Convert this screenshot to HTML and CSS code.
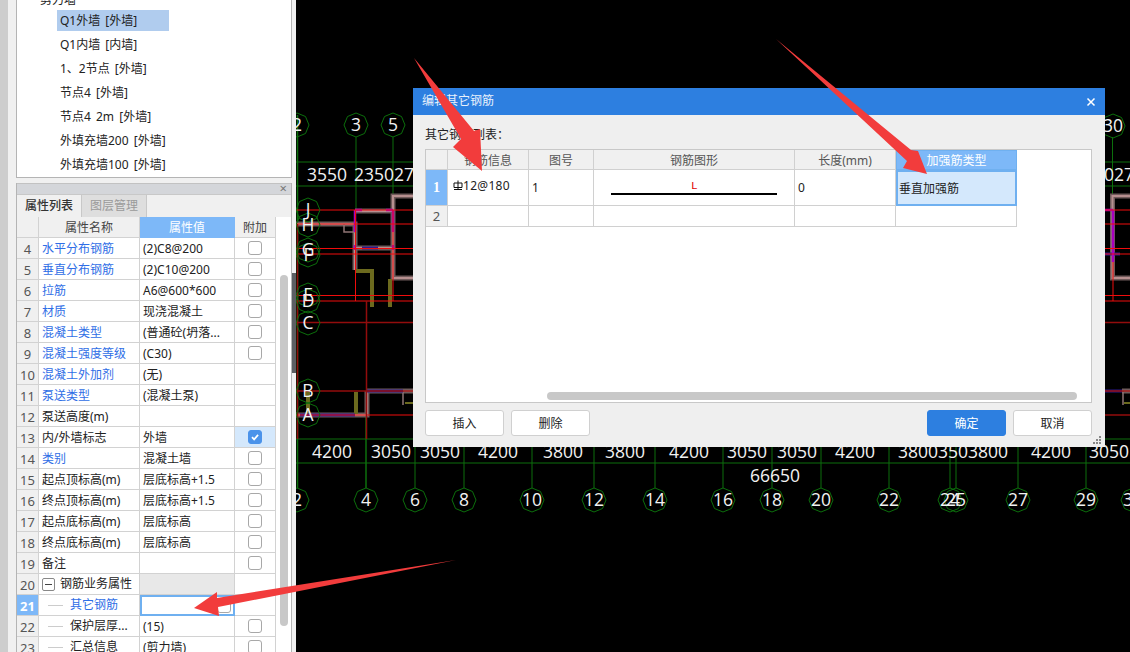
FILE: index.html
```html
<!DOCTYPE html>
<html lang="zh">
<head>
<meta charset="utf-8">
<title>编辑其它钢筋</title>
<link rel="stylesheet" href="styles.css">
</head>
<body>
<div class="app">
  <aside class="sidebar">
    <div class="strip"></div>
    <div class="panels">
      <ul class="tree">
        <li class="tree-root">剪力墙</li>
        <li class="tree-item selected">Q1外墙 [外墙]</li>
        <li class="tree-item">Q1内墙 [内墙]</li>
        <li class="tree-item">1、2节点 [外墙]</li>
        <li class="tree-item">节点4 [外墙]</li>
        <li class="tree-item">节点4 2m [外墙]</li>
        <li class="tree-item">外填充墙200 [外墙]</li>
        <li class="tree-item">外填充墙100 [外墙]</li>
      </ul>
      <section class="props">
        <div class="props-title"><span class="props-close">×</span></div>
        <div class="tabs"><span class="tab active">属性列表</span><span class="tab">图层管理</span></div>
        <div class="props-body">
          <div class="grid">
            <div class="hd"></div><div class="hd">属性名称</div><div class="hd hd-on">属性值</div><div class="hd">附加</div>

            <div class="n">4</div><div class="k link">水平分布钢筋</div><div class="v">(2)C8@200</div><div class="a"><i class="cb"></i></div>
            <div class="n">5</div><div class="k link">垂直分布钢筋</div><div class="v">(2)C10@200</div><div class="a"><i class="cb"></i></div>
            <div class="n">6</div><div class="k link">拉筋</div><div class="v">A6@600*600</div><div class="a"><i class="cb"></i></div>
            <div class="n">7</div><div class="k link">材质</div><div class="v">现浇混凝土</div><div class="a"><i class="cb"></i></div>
            <div class="n">8</div><div class="k link">混凝土类型</div><div class="v">(普通砼(坍落...</div><div class="a"><i class="cb"></i></div>
            <div class="n">9</div><div class="k link">混凝土强度等级</div><div class="v">(C30)</div><div class="a"><i class="cb"></i></div>
            <div class="n">10</div><div class="k link">混凝土外加剂</div><div class="v">(无)</div><div class="a"></div>
            <div class="n">11</div><div class="k link">泵送类型</div><div class="v">(混凝土泵)</div><div class="a"></div>
            <div class="n">12</div><div class="k">泵送高度(m)</div><div class="v"></div><div class="a"></div>
            <div class="n">13</div><div class="k">内/外墙标志</div><div class="v">外墙</div><div class="a a-on"><i class="cb cb-on"><svg class="tick" viewBox="0 0 14 14"><path d="M3.5 7.2 6 9.8 10.6 4.6"/></svg></i></div>
            <div class="n">14</div><div class="k link">类别</div><div class="v">混凝土墙</div><div class="a"><i class="cb"></i></div>
            <div class="n">15</div><div class="k">起点顶标高(m)</div><div class="v">层底标高+1.5</div><div class="a"><i class="cb"></i></div>
            <div class="n">16</div><div class="k">终点顶标高(m)</div><div class="v">层底标高+1.5</div><div class="a"><i class="cb"></i></div>
            <div class="n">17</div><div class="k">起点底标高(m)</div><div class="v">层底标高</div><div class="a"><i class="cb"></i></div>
            <div class="n">18</div><div class="k">终点底标高(m)</div><div class="v">层底标高</div><div class="a"><i class="cb"></i></div>
            <div class="n">19</div><div class="k">备注</div><div class="v"></div><div class="a"><i class="cb"></i></div>
            <div class="n">20</div><div class="k group"><i class="minus"></i>钢筋业务属性</div><div class="v v-gray"></div><div class="a"></div>
            <div class="n n-on">21</div><div class="k child link"><i class="dash"></i>其它钢筋</div><div class="v v-edit"><i class="mini"></i></div><div class="a-hidden"></div>
            <div class="n">22</div><div class="k child"><i class="dash"></i>保护层厚...</div><div class="v">(15)</div><div class="a"><i class="cb"></i></div>
            <div class="n">23</div><div class="k child"><i class="dash"></i>汇总信息</div><div class="v">(剪力墙)</div><div class="a"><i class="cb"></i></div>
          </div>
          <div class="rail"><div class="thumb"></div></div>
        </div>
      </section>
    </div>
    <div class="splitter"><div class="split-grip"></div></div>
  </aside>

  <main class="canvas">
    <svg class="cad" viewBox="296 0 834 652" xmlns="http://www.w3.org/2000/svg">
      <defs>
        <polygon id="oct" points="0,-12 8.5,-8.5 12,0 8.5,8.5 0,12 -8.5,8.5 -12,0 -8.5,-8.5"/>
        <path id="walls" d="M296 224H355V270M355 211H393V278H413M393 211V196H413M355 248H393M367 391V415H296M367 391H413M1130 196H1112.500V278H1130M1122 391H1130"/>
      </defs>
      <g class="g1">
        <path d="M296 162H413M296 186H413M296 439H413M1105 162H1130M1105 186H1130M1105 439H1130M296 463H1130"/>
        <path d="M356 137V210M393 137V210M1112.500 137V196"/>
        <path d="M415 439V488M464 439V488M532 439V488M594 439V488M655 439V488M723 439V488M772 439V488M821 439V488M889 439V488M950 439V488M956 439V488M1018 439V488M1086 439V488"/>
      </g>
      <path class="g2" d="M297.500 115V488M366 415V488"/>
      <use href="#walls" class="wall-out"/>
      <use href="#walls" class="wall-in"/>
      <path class="thin" d="M344 224V232H355M403 391V405M1123 391V405"/>
      <path class="olive" d="M355 271H372V307M390 279V307M356 392V414M308 391V415"/>
      <path class="olive-s" d="M405 403H413M1124 403H1130"/>
      <path class="navy" d="M300 415H355M367 391H403M362 248H378M1105 254H1120M1105 391H1122"/>
      <path class="mag" d="M355 210V232M393 210V232M355 245V250M393 245V250M355 210H362M393 210H386M1113 210V262M1105 210H1113"/>
      <path class="red" d="M296 210H413M296 224H413M296 248.500H413M296 254H413M296 295.500H413M296 301H413M296 415H413M355.500 210V301M393 210V301M1105 210H1130M1105 224H1130M1105 248.500H1130M1105 254H1130M1105 295.500H1130M1105 301H1130M1113 262V301"/>
      <path class="dred" d="M296 322.500H413M296 391H413M366.500 301V439M297.500 224V439M1105 322.500H1130M1105 391H1130M1105 415H1130"/>
      <g class="ring">
        <use href="#oct" x="297" y="125"/><use href="#oct" x="356" y="125"/><use href="#oct" x="393" y="125"/><use href="#oct" x="1113" y="126"/>
        <use href="#oct" x="308" y="210"/><use href="#oct" x="308" y="225"/><use href="#oct" x="308" y="250"/><use href="#oct" x="308" y="255"/><use href="#oct" x="308" y="295"/><use href="#oct" x="308" y="301"/><use href="#oct" x="308" y="323"/><use href="#oct" x="308" y="391"/><use href="#oct" x="308" y="415"/>
        <use href="#oct" x="297" y="500"/><use href="#oct" x="366" y="500"/><use href="#oct" x="415" y="500"/><use href="#oct" x="464" y="500"/><use href="#oct" x="532" y="500"/><use href="#oct" x="594" y="500"/><use href="#oct" x="655" y="500"/><use href="#oct" x="723" y="500"/><use href="#oct" x="772" y="500"/><use href="#oct" x="821" y="500"/><use href="#oct" x="889" y="500"/><use href="#oct" x="950" y="500"/><use href="#oct" x="956" y="500"/><use href="#oct" x="1018" y="500"/><use href="#oct" x="1086" y="500"/><use href="#oct" x="1133" y="500"/>
      </g>
      <g class="label">
        <text x="297" y="131">2</text><text x="356" y="131">3</text><text x="393" y="131">5</text><text x="1113" y="132">30</text>
        <text x="308" y="216">J</text><text x="308" y="231">H</text><text x="308" y="256">G</text><text x="308" y="261">F</text><text x="308" y="301">E</text><text x="308" y="307">D</text><text x="308" y="329">C</text><text x="308" y="397">B</text><text x="308" y="421">A</text>
        <text x="327" y="181">3550</text><text x="384" y="181">235027</text><text x="1119" y="181">027</text>
        <text x="332" y="458">4200</text><text x="391" y="458">3050</text><text x="440" y="458">3050</text><text x="498" y="458">4200</text><text x="563" y="458">3800</text><text x="625" y="458">3800</text><text x="689" y="458">4200</text><text x="747" y="458">3050</text><text x="797" y="458">3050</text><text x="855" y="458">4200</text><text x="953" y="458">38003503800</text><text x="1051" y="458">4200</text><text x="1109" y="458">3050</text>
        <text x="775" y="482">66650</text>
        <text x="297" y="506">2</text><text x="366" y="506">4</text><text x="415" y="506">6</text><text x="464" y="506">8</text><text x="532" y="506">10</text><text x="594" y="506">12</text><text x="655" y="506">14</text><text x="723" y="506">16</text><text x="772" y="506">18</text><text x="821" y="506">20</text><text x="889" y="506">22</text><text x="950" y="506">24</text><text x="956" y="506">25</text><text x="1018" y="506">27</text><text x="1086" y="506">29</text><text x="1133" y="506">30</text>
      </g>
    </svg>
  </main>
</div>

<div class="dialog">
  <header class="dlg-title"><span>编辑其它钢筋</span><svg class="dlg-x" viewBox="0 0 10 10"><path d="M1.500 1.500 8.500 8.500M8.500 1.500 1.500 8.500"/></svg></header>
  <div class="dlg-body">
    <div class="dlg-label">其它钢筋列表：</div>
    <div class="dlg-table">
      <div class="rebar">
        <div class="rh"></div><div class="rh">钢筋信息</div><div class="rh">图号</div><div class="rh">钢筋图形</div><div class="rh">长度(mm)</div><div class="rh rh-on">加强筋类型</div>
        <div class="rn rn-on">1</div>
        <div class="rc rc-info"><svg class="grade" viewBox="0 0 10 11"><path d="M1 7.500V3H9V7.500H1M5 .5V9.500M1 9.500H9"/></svg><span class="rc-val">12@180</span></div>
        <div class="rc rc-1">1</div>
        <div class="rc shape"><span class="shape-l">L</span><span class="shape-bar"></span></div>
        <div class="rc rc-1">0</div>
        <div class="rc rc-on">垂直加强筋</div>
        <div class="rn">2</div><div class="rc"></div><div class="rc"></div><div class="rc"></div><div class="rc"></div><div class="rc"></div>
      </div>
      <div class="hbar"><div class="hthumb"></div></div>
    </div>
    <div class="dlg-actions">
      <button class="btn">插入</button><button class="btn">删除</button>
      <span class="spacer"></span>
      <button class="btn primary">确定</button><button class="btn">取消</button>
    </div>
  </div>
  <svg class="grip" viewBox="0 0 9 9"><path d="M6 0h2v2H6zM3 3h2v2H3zM6 3h2v2H6zM0 6h2v2H0zM3 6h2v2H3zM6 6h2v2H6z"/></svg>
</div>

<svg class="arrows" viewBox="0 0 1130 652" xmlns="http://www.w3.org/2000/svg">
  <polygon points="414,58 474,131 480,129 482,171 453,147 461,139"/>
  <polygon points="776,39 911,150 918,151 927,174 903,168 907,161"/>
  <polygon points="456,560 217,598 217,592 194,608 219,616 218,607"/>
</svg>
</body>
</html>
```
FILE: styles.css
```css
* { box-sizing: border-box; }
html, body { margin: 0; padding: 0; width: 1130px; height: 652px; overflow: hidden; background: #000; }
body { position: relative; font: 12px/1.2 "Noto Sans", "Noto Sans CJK SC", sans-serif; color: #222; }
.app { display: flex; width: 1130px; height: 652px; }

/* sidebar */
.sidebar { display: flex; width: 296px; height: 652px; flex: none; background: #f0f0f0; }
.strip { width: 8px; background: #cdcdcd; flex: none; }
.panels { width: 276px; margin-left: 8px; flex: none; display: flex; flex-direction: column; }
.splitter { width: 4px; margin-left: 0; flex: none; padding-top: 273px; }
.split-grip { height: 100px; background: #5c5f63; }

.tree { list-style: none; margin: 0; padding: 0; height: 178px; flex: none; background: #fff; border: 1px solid #b4b4b4; border-top: 0; overflow: hidden; }
.tree-root { height: 10px; padding-left: 23px; line-height: 0; }
.tree-item { height: 21px; margin: 0 0 3px 40px; padding-left: 3px; line-height: 22px; width: 112px; color: #222; white-space: nowrap; word-spacing: 2px; }
.tree-item.selected { background: #b0ccee; }

.props { margin-top: 5px; flex: 1; min-height: 0; overflow: hidden; border-left: 1px solid #b4b4b4; border-right: 1px solid #b4b4b4; background: #fff; }
.props-title { height: 11px; background: #d4d6da; border-top: 1px solid #c2c2c2; display: flex; justify-content: flex-end; padding-right: 4px; }
.props-close { font-size: 13px; line-height: 9px; color: #777; }
.tabs { display: flex; height: 23px; background: #f0f0f0; border-top: 1px solid #c8c8c8; }
.tab { width: 65px; line-height: 21px; text-align: center; font-size: 12px; color: #9a9a9a; background: #dedede; border-right: 1px solid #c8c8c8; }
.tab.active { color: #333; background: #f0f0f0; font-weight: 500; }

.props-body { display: flex; }
.grid { display: grid; grid-template-columns: 22px 101px 95px 41px; grid-auto-rows: 21px; width: 259px; flex: none; border-right: 1px solid #fff; }
.grid > div { border-right: 1px solid #d2d2d2; border-bottom: 1px solid #d2d2d2; white-space: nowrap; overflow: hidden; line-height: 22px; }
.grid > .hd { background: #f0f0f0; text-align: center; color: #444; font-size: 12px; line-height: 21px; }
.grid > .hd-on { background: #7db8f8; color: #fff; border-color: #7db8f8; }
.n { background: #f0f0f0; text-align: center; color: #555; font-size: 13px; }
.n-on { background: #7db8f8; color: #fff; font-weight: 700; }
.k { padding-left: 3px; color: #222; }
.link { color: #2f6ee6; }
.v { padding-left: 3px; color: #222; }
.v-gray { background: #e8e8e8; }
.grid > .v-edit { border: 2px solid #6fb0f0; position: relative; }
.a { display: flex; align-items: center; justify-content: center; }
.a-on { background: #d4e8fc; }
.cb { display: block; width: 14px; height: 14px; border: 1px solid #a8a8a8; border-radius: 3px; background: #fff; }
.cb-on { background: #4b93ea; border-color: #4b93ea; }
.tick { display: block; width: 12px; height: 12px; fill: none; stroke: #fff; stroke-width: 2; }
.group { padding-left: 3px; display: flex; align-items: center; }
.minus { width: 13px; height: 13px; border: 1px solid #888; border-radius: 2px; margin-right: 5px; flex: none; position: relative; }
.minus::after { content: ""; position: absolute; left: 2px; right: 2px; top: 5px; height: 1px; background: #444; }
.child { display: flex; align-items: center; padding-left: 9px; }
.dash { width: 15px; height: 1px; background: #ccc; margin-right: 7px; flex: none; }
.mini { position: absolute; right: 2px; top: 1px; width: 14px; height: 15px; border: 1px solid #a8a8a8; border-radius: 3px; }
.rail { width: 16px; flex: none; padding: 58px 0 0 4px; }
.thumb { width: 8px; height: 351px; background: #c8c8c8; border-radius: 4px; }

/* canvas */
.canvas { flex: 1; min-width: 0; }
.cad { display: block; width: 834px; height: 652px; background: #000; }
.g1 path, .g1 { fill: none; stroke: #0c6f0c; stroke-width: 1; }
.g2 { fill: none; stroke: #0c6f0c; stroke-width: 1.500; }
.ring { fill: none; stroke: #0c6f0c; stroke-width: 1; }
.wall-out { fill: none; stroke: #6f5a5a; stroke-width: 5; }
.wall-in { fill: none; stroke: #b68f8f; stroke-width: 2; }
.thin { fill: none; stroke: #8f7474; stroke-width: 1.500; }
.olive { fill: none; stroke: #6c6a1e; stroke-width: 4; }
.olive-s { fill: none; stroke: #6c6a1e; stroke-width: 2; }
.navy { fill: none; stroke: #2c1a8c; stroke-width: 3; }
.mag { fill: none; stroke: #a800c0; stroke-width: 2.500; }
.red { fill: none; stroke: #f00c0c; stroke-width: 1; }
.dred { fill: none; stroke: #920c0c; stroke-width: 1.500; }
.label text { font: 17.500px "Open Sans", "DejaVu Sans", sans-serif; fill: #f2f2f2; text-anchor: middle; }

/* dialog */
.dialog { position: absolute; left: 413px; top: 88px; width: 692px; height: 359px; background: #efefef; }
.dlg-title { height: 27px; background: #2d7fe0; color: #e8f1fc; display: flex; align-items: center; justify-content: space-between; padding: 0 9px; }
.dlg-x { width: 10px; height: 10px; fill: none; stroke: #fff; stroke-width: 1.500; }
.dlg-body { padding: 12px 13px 0 12px; }
.dlg-label { height: 22px; line-height: 16px; color: #222; }
.dlg-table { height: 254px; background: #fff; border: 1px solid #c8c8c8; position: relative; }
.rebar { display: grid; grid-template-columns: 22px 81px 65px 201px 101px 121px; grid-template-rows: 20px 36px 21px; width: 591px; }
.rebar > div { border-right: 1px solid #d0d0d0; border-bottom: 1px solid #d0d0d0; white-space: nowrap; }
.rh { background: #f0f0f0; text-align: center; line-height: 21px; color: #555; }
.rebar > .rh-on { background: #7db8f8; color: #fff; border: 1px solid #6fb0f0; line-height: 19px; }
.rn { background: #f0f0f0; text-align: center; color: #555; line-height: 21px; font-size: 13px; }
.rn-on { background: #7db8f8; color: #fff; font-weight: 700; line-height: 35px; font-size: 14px; font-family: "Liberation Serif", serif; }
.rc { padding: 0 0 0 5px; color: #222; display: flex; align-items: flex-start; }
.rc-info { padding: 9px 0 0 5px; }
.rc-val { letter-spacing: .3px; margin-left: 0; }
.rc-1 { padding: 11px 0 0 3px; }
.grade { width: 10px; height: 11px; margin-top: 1px; fill: none; stroke: #111; stroke-width: 1; }
.rebar > .rc-on { background: #d4e8fc; border: 2px solid #6fb0f0; padding: 10px 0 0 1px; }
.shape { position: relative; padding: 0; display: block; }
.shape-l { position: absolute; left: 97px; top: 10px; font: 11px "Liberation Mono", monospace; color: #e00000; }
.shape-bar { position: absolute; left: 17px; width: 166px; top: 23px; height: 2px; background: #000; }
.hbar { position: absolute; left: 121px; right: 14px; top: 242px; }
.hthumb { height: 8px; background: #c8c8c8; border-radius: 4px; }
.dlg-actions { display: flex; gap: 7px; margin-top: 7px; }
.spacer { flex: 1; }
.btn { width: 79px; height: 26px; padding: 2px 0 0; background: #fff; border: 1px solid #d0d0d0; border-radius: 3px; font: inherit; color: #222; }
.btn.primary { background: #2d7fe0; border-color: #2d7fe0; color: #fff; }
.grip { position: absolute; right: 3px; bottom: 2px; width: 9px; height: 9px; fill: #888; }

/* annotation arrows */
.arrows { position: absolute; left: 0; top: 0; width: 1130px; height: 652px; pointer-events: none; fill: #f23c3c; }
```
